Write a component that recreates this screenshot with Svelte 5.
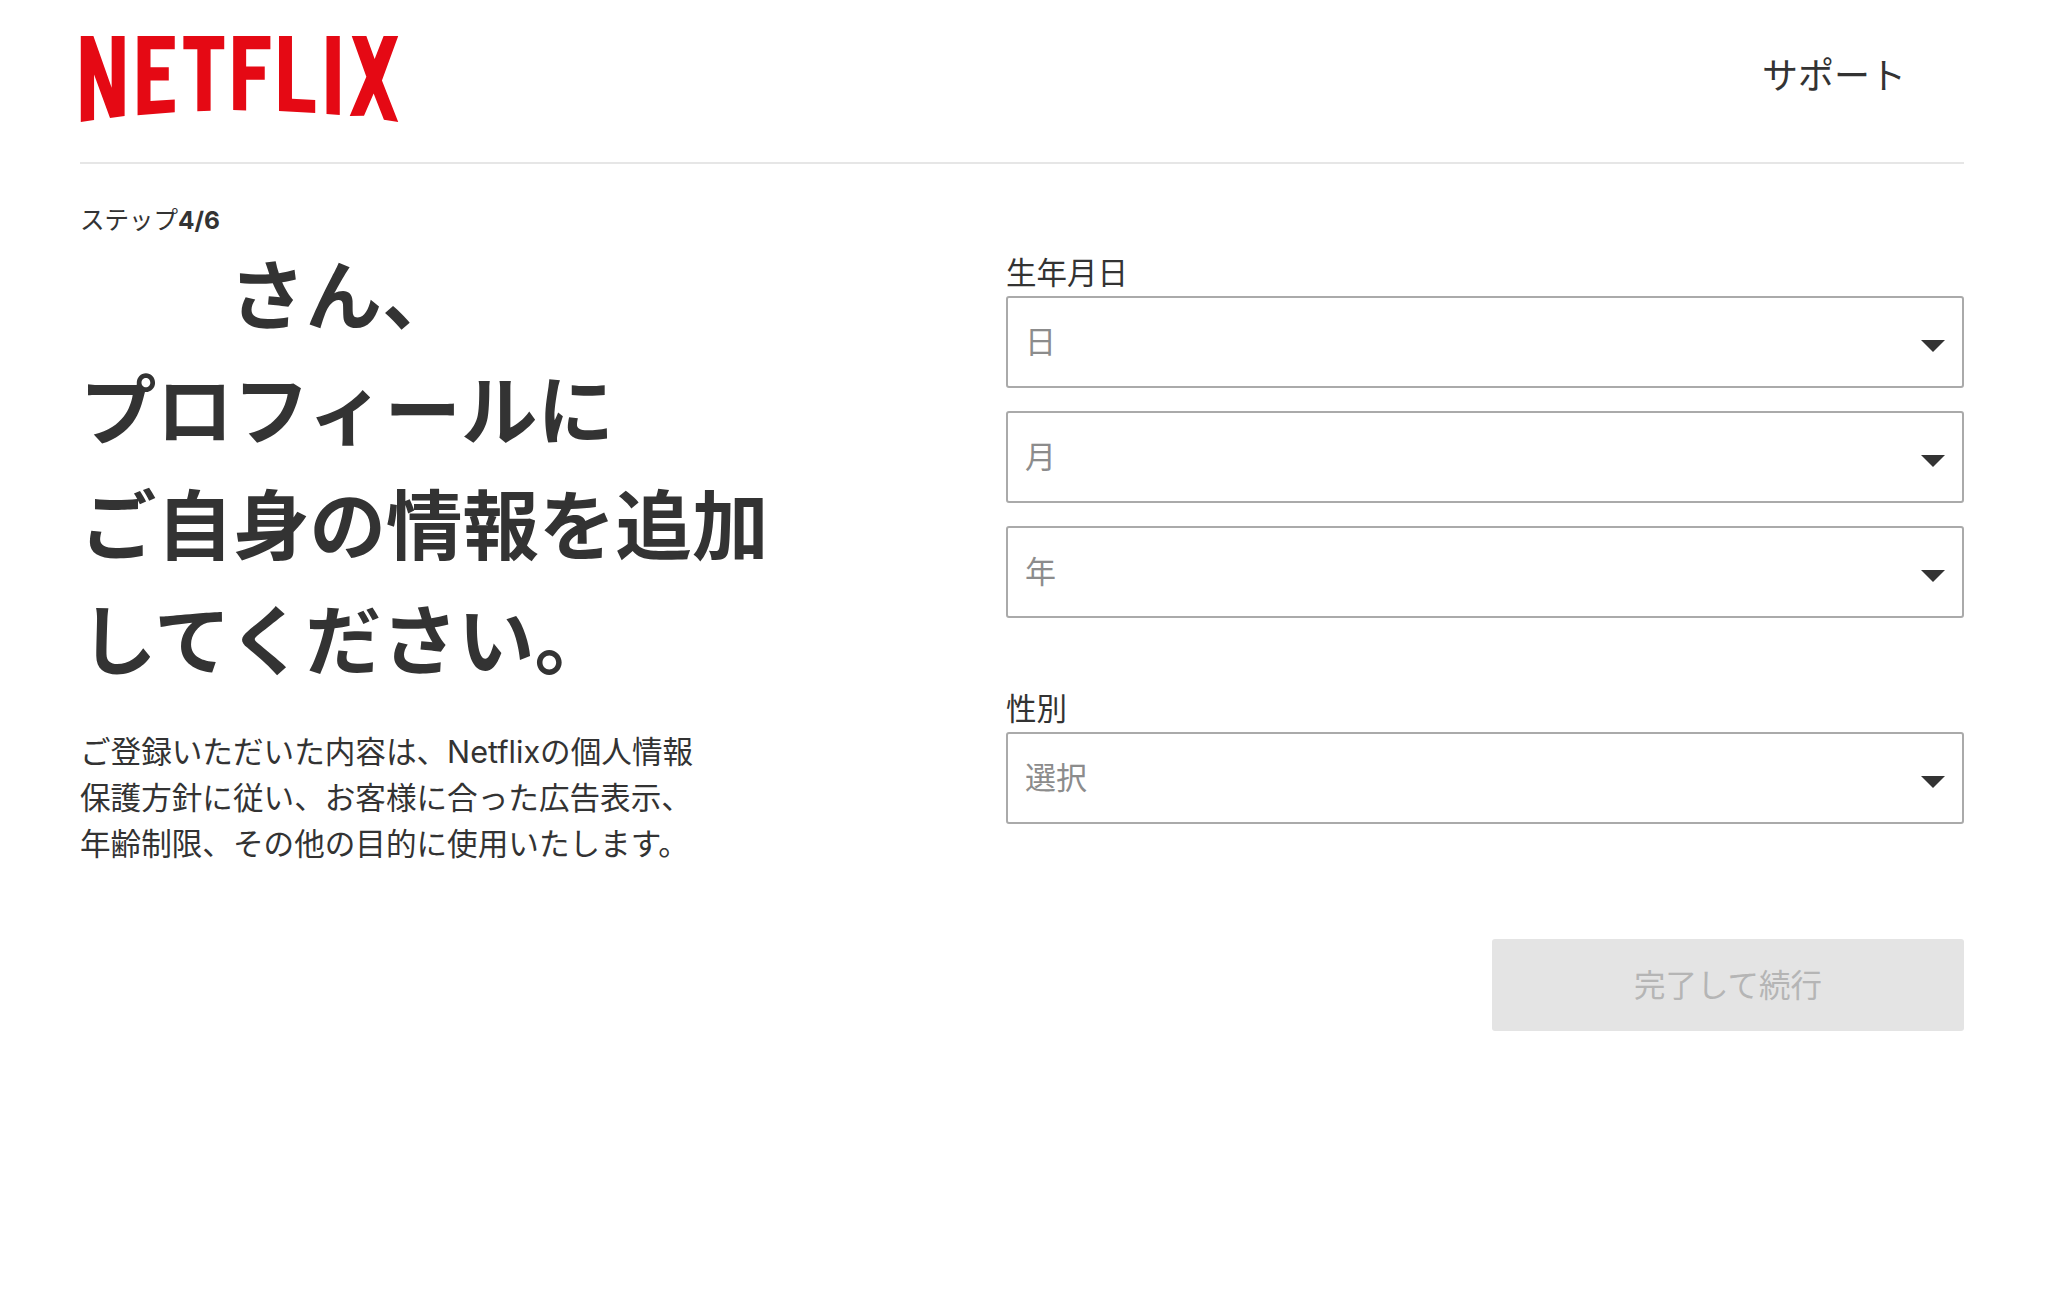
<script>
  const dateFields = ['日', '月', '年'];
</script>

<div class="page">
  <header class="top">
    <svg class="logo" viewBox="240 109 956 259" aria-label="Netflix" role="img">
      <path d="M240 109H278L333 265V109H372V350L328 356 280 225V362L240 368Z" />
      <path d="M411 109H523V149H450V203H505V243H450V305L523 300V339L411 348Z" />
      <path d="M549 109H672V149H631V334L591 336V149H549Z" />
      <path d="M699 109H811V149H738V201H794V241H738V333L699 332Z" />
      <path d="M837 109H876V298L946 302V341L837 335Z" />
      <path d="M980 109H1020V347L980 344Z" />
      <path d="M1056 109H1100L1125 178 1152 109H1196L1147 243 1196 368 1153 361 1122 282 1093 349 1050 350 1100 232Z" />
    </svg>
    <a class="support" href="#support">サポート</a>
  </header>

  <main class="content">
    <section class="intro">
      <div class="step">ステップ<b>4/6</b></div>
      <h1><span class="name-gap"></span>さん、<br />プロフィールに<br />ご自身の情報を追加<br />してください。</h1>
      <p>ご登録いただいた内容は、Netflixの個人情報<br />保護方針に従い、お客様に合った広告表示、<br />年齢制限、その他の目的に使用いたします。</p>
    </section>

    <form class="form">
      <div class="label">生年月日</div>
      <div class="stack">
        {#each dateFields as field}
          <div class="select">
            <span>{field}</span>
            <i class="arrow"></i>
          </div>
        {/each}
      </div>

      <div class="label gender">性別</div>
      <div class="select">
        <span>選択</span>
        <i class="arrow"></i>
      </div>

      <button type="button" disabled>完了して続行</button>
    </form>
  </main>
</div>

<style>
  :global(body) {
    margin: 0;
    background: #fff;
  }

  .page {
    min-height: 1304px;
    box-sizing: border-box;
    padding: 0 84px 0 80px;
    color: #333;
    font-family: Inter, "Noto Sans CJK JP", sans-serif;
  }

  .top {
    display: flex;
    justify-content: space-between;
    height: 162px;
    border-bottom: 2px solid #e6e6e6;
  }

  .logo {
    width: 319px;
    height: 86px;
    margin-top: 36px;
    fill: #e50914;
  }

  .support {
    margin: 51px 58px 0 0;
    font-size: 36px;
    line-height: 50px;
    color: #333;
    text-decoration: none;
  }

  .content {
    display: grid;
    grid-template-columns: 926px 958px;
  }

  .intro {
    padding-top: 38px;
  }

  .step {
    font-size: 24.5px;
    line-height: 37px;
  }

  .step b {
    font-weight: 700;
  }

  h1 {
    margin: 0;
    font-size: 76.5px;
    line-height: 115px;
    font-weight: 700;
    color: #333;
  }

  .name-gap {
    display: inline-block;
    width: 149px;
  }

  p {
    margin: 30px 0 0;
    font-size: 30.6px;
    line-height: 46px;
  }

  .form {
    display: flex;
    flex-direction: column;
    padding-top: 89px;
  }

  .label {
    font-size: 30.5px;
    line-height: 40px;
    margin-bottom: 3px;
  }

  .label.gender {
    margin-top: 71px;
  }

  .stack {
    display: flex;
    flex-direction: column;
    gap: 23px;
  }

  .select {
    position: relative;
    display: flex;
    align-items: center;
    height: 92px;
    box-sizing: border-box;
    padding: 0 17px 6px;
    border: 2px solid #aaa;
    border-radius: 3px;
    font-size: 31px;
    color: #8c8c8c;
  }

  .arrow {
    position: absolute;
    right: 17px;
    top: 42px;
    width: 0;
    height: 0;
    border-left: 12px solid transparent;
    border-right: 12px solid transparent;
    border-top: 12px solid #333;
  }

  button {
    align-self: flex-end;
    width: 472px;
    height: 92px;
    margin-top: 115px;
    padding: 0 0 4px;
    border: 0;
    border-radius: 3px;
    background: #e4e4e4;
    color: #b5b5b5;
    font: inherit;
    font-size: 31.5px;
  }
</style>
